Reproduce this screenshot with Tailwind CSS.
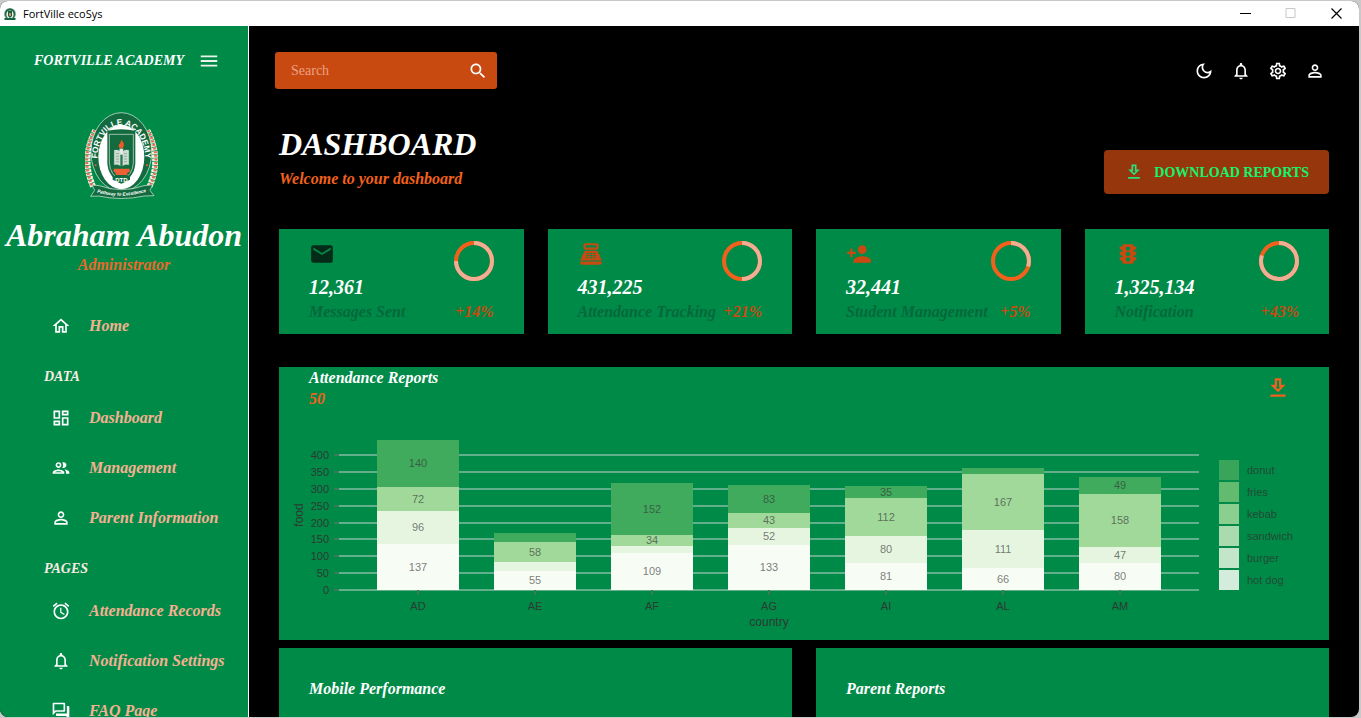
<!DOCTYPE html>
<html lang="en">
<head>
<meta charset="utf-8">
<title>FortVille ecoSys</title>
<script src="https://cdn.jsdelivr.net/npm/@tailwindcss/browser@4"></script>
</head>
<body class="bg-[#c9c9c9]">
<svg class="hidden" aria-hidden="true">
  <symbol id="i-menu" viewBox="0 0 24 24"><path d="M3 18h18v-2H3v2zm0-5h18v-2H3v2zm0-7v2h18V6H3z"/></symbol>
  <symbol id="i-home" viewBox="0 0 24 24"><path d="m12 5.69 5 4.5V18h-2v-6H9v6H7v-7.81l5-4.5M12 3 2 12h3v8h6v-6h2v6h6v-8h3L12 3z"/></symbol>
  <symbol id="i-dash" viewBox="0 0 24 24"><path d="M19 5v2h-4V5h4M9 5v6H5V5h4m10 8v6h-4v-6h4M9 17v2H5v-2h4M21 3h-8v6h8V3zM11 3H3v10h8V3zm10 8h-8v10h8V11zm-10 4H3v6h8v-6z"/></symbol>
  <symbol id="i-people" viewBox="0 0 24 24"><path d="M9 13.75c-2.34 0-7 1.17-7 3.5V19h14v-1.75c0-2.33-4.66-3.5-7-3.5zM4.34 17c.84-.58 2.87-1.25 4.66-1.25s3.82.67 4.66 1.25H4.34zM9 12c1.93 0 3.5-1.57 3.5-3.5S10.93 5 9 5 5.5 6.57 5.5 8.5 7.07 12 9 12zm0-5c.83 0 1.5.67 1.5 1.5S9.83 10 9 10s-1.5-.67-1.5-1.5S8.17 7 9 7zm7.04 6.81c1.16.84 1.96 1.96 1.96 3.44V19h4v-1.75c0-2.02-3.5-3.17-5.96-3.44zM15 12c1.93 0 3.5-1.57 3.5-3.5S16.93 5 15 5c-.54 0-1.04.13-1.5.35.63.89 1 1.98 1 3.15s-.37 2.26-1 3.15c.46.22.96.35 1.5.35z"/></symbol>
  <symbol id="i-person" viewBox="0 0 24 24"><path d="M12 5.9c1.16 0 2.1.94 2.1 2.1s-.94 2.1-2.1 2.1S9.9 9.16 9.9 8s.94-2.1 2.1-2.1m0 9c2.97 0 6.1 1.46 6.1 2.1v1.1H5.9V17c0-.64 3.13-2.1 6.1-2.1M12 4C9.79 4 8 5.79 8 8s1.79 4 4 4 4-1.79 4-4-1.79-4-4-4zm0 9c-2.67 0-8 1.34-8 4v3h16v-3c0-2.66-5.33-4-8-4z"/></symbol>
  <symbol id="i-alarm" viewBox="0 0 24 24"><path d="M12.5 8H11v6l4.75 2.85.75-1.23-4-2.37V8zm4.837-6.19 4.607 3.845-1.28 1.535-4.61-3.843 1.282-1.536zm-10.674 0 1.282 1.536L3.337 7.19l-1.28-1.536L6.663 1.81zM12 4c-4.97 0-9 4.03-9 9s4.03 9 9 9 9-4.03 9-9-4.03-9-9-9zm0 16c-3.86 0-7-3.14-7-7s3.14-7 7-7 7 3.14 7 7-3.14 7-7 7z"/></symbol>
  <symbol id="i-bell" viewBox="0 0 24 24"><path d="M12 22c1.1 0 2-.9 2-2h-4c0 1.1.89 2 2 2zm6-6v-5c0-3.07-1.64-5.64-4.5-6.32V4c0-.83-.67-1.5-1.5-1.5s-1.5.67-1.5 1.5v.68C7.63 5.36 6 7.92 6 11v5l-2 2v1h16v-1l-2-2zm-2 1H8v-6c0-2.48 1.51-4.5 4-4.5s4 2.02 4 4.5v6z"/></symbol>
  <symbol id="i-forum" viewBox="0 0 24 24"><path d="M15 4v7H5.17L4 12.17V4h11m1-2H3c-.55 0-1 .45-1 1v14l4-4h10c.55 0 1-.45 1-1V3c0-.55-.45-1-1-1zm5 4h-2v9H6v2c0 .55.45 1 1 1h11l4 4V7c0-.55-.45-1-1-1z"/></symbol>
  <symbol id="i-search" viewBox="0 0 24 24"><path d="M15.5 14h-.79l-.28-.27C15.41 12.59 16 11.11 16 9.5 16 5.91 13.09 3 9.5 3S3 5.91 3 9.5 5.91 16 9.5 16c1.61 0 3.09-.59 4.23-1.57l.27.28v.79l5 4.99L20.49 19l-4.99-5zm-6 0C7.01 14 5 11.99 5 9.5S7.01 5 9.5 5 14 7.01 14 9.5 11.99 14 9.5 14z"/></symbol>
  <symbol id="i-moon" viewBox="0 0 24 24"><path d="M9.37 5.51c-.18.64-.27 1.31-.27 1.99 0 4.08 3.32 7.4 7.4 7.4.68 0 1.35-.09 1.99-.27C17.45 17.19 14.93 19 12 19c-3.86 0-7-3.14-7-7 0-2.93 1.81-5.45 4.37-6.49zM12 3c-4.97 0-9 4.03-9 9s4.03 9 9 9 9-4.03 9-9c0-.46-.04-.92-.1-1.36-.98 1.37-2.58 2.26-4.4 2.26-2.98 0-5.4-2.42-5.4-5.4 0-1.81.89-3.42 2.26-4.4-.44-.06-.9-.1-1.36-.1z"/></symbol>
  <symbol id="i-gear" viewBox="0 0 24 24"><path d="M19.43 12.98c.04-.32.07-.64.07-.98 0-.34-.03-.66-.07-.98l2.11-1.65c.19-.15.24-.42.12-.64l-2-3.46c-.09-.16-.26-.25-.44-.25-.06 0-.12.01-.17.03l-2.49 1c-.52-.4-1.08-.73-1.69-.98l-.38-2.65C14.46 2.18 14.25 2 14 2h-4c-.25 0-.46.18-.49.42l-.38 2.65c-.61.25-1.17.59-1.69.98l-2.49-1c-.06-.02-.12-.03-.18-.03-.17 0-.34.09-.43.25l-2 3.46c-.13.22-.07.49.12.64l2.11 1.65c-.04.32-.07.65-.07.98 0 .33.03.66.07.98l-2.11 1.65c-.19.15-.24.42-.12.64l2 3.46c.09.16.26.25.44.25.06 0 .12-.01.17-.03l2.49-1c.52.4 1.08.73 1.69.98l.38 2.65c.03.24.24.42.49.42h4c.25 0 .46-.18.49-.42l.38-2.65c.61-.25 1.17-.59 1.69-.98l2.49 1c.06.02.12.03.18.03.17 0 .34-.09.43-.25l2-3.46c.12-.22.07-.49-.12-.64l-2.11-1.65zm-1.98-1.71c.04.31.05.52.05.73 0 .21-.02.43-.05.73l-.14 1.13.89.7 1.08.84-.7 1.21-1.27-.51-1.04-.42-.9.68c-.43.32-.84.56-1.25.73l-1.06.43-.16 1.13-.2 1.35h-1.4l-.19-1.35-.16-1.13-1.06-.43c-.43-.18-.83-.41-1.23-.71l-.91-.7-1.06.43-1.27.51-.7-1.21 1.08-.84.89-.7-.14-1.13c-.03-.31-.05-.54-.05-.74s.02-.43.05-.73l.14-1.13-.89-.7-1.08-.84.7-1.21 1.27.51 1.04.42.9-.68c.43-.32.84-.56 1.25-.73l1.06-.43.16-1.13.2-1.35h1.39l.19 1.35.16 1.13 1.06.43c.43.18.83.41 1.23.71l.91.7 1.06-.43 1.27-.51.7 1.21-1.07.85-.89.7.14 1.13zM12 8c-2.21 0-4 1.79-4 4s1.79 4 4 4 4-1.79 4-4-1.79-4-4-4zm0 6c-1.1 0-2-.9-2-2s.9-2 2-2 2 .9 2 2-.9 2-2 2z"/></symbol>
  <symbol id="i-download" viewBox="0 0 24 24"><path d="M19 9h-4V3H9v6H5l7 7 7-7zm-8 2V5h2v6h1.17L12 13.17 9.83 11H11zm-6 7h14v2H5z"/></symbol>
  <symbol id="i-mail" viewBox="0 0 24 24"><path d="M20 4H4c-1.1 0-1.99.9-1.99 2L2 18c0 1.1.9 2 2 2h16c1.1 0 2-.9 2-2V6c0-1.1-.9-2-2-2zm0 4l-8 5-8-5V6l8 5 8-5v2z"/></symbol>
  <symbol id="i-pos" viewBox="0 0 24 24"><path fill-rule="evenodd" d="M17 2H7c-1.1 0-2 .9-2 2v2c0 1.1.9 2 2 2h10c1.1 0 2-.9 2-2V4c0-1.1-.9-2-2-2zm0 4H7V4h10v2zm3 16H4c-1.100 0-2-.9-2-2v-1h20v1c0 1.100-.9 2-2 2zm-1.470-11.810C18.210 9.470 17.490 9 16.700 9H7.300c-.79 0-1.510.47-1.830 1.190L2 18h20l-3.470-7.810zM8 11h2v1H8zm3 0h2v1h-2zm3 0h2v1h-2zM8 13h2v1H8zm3 0h2v1h-2zm3 0h2v1h-2zM8 15h2v1H8zm3 0h2v1h-2zm3 0h2v1h-2z"/></symbol>
  <symbol id="i-add" viewBox="0 0 24 24"><path d="M15 12c2.21 0 4-1.79 4-4s-1.79-4-4-4-4 1.79-4 4 1.79 4 4 4zm-9-2V7H4v3H1v2h3v3h2v-3h3v-2H6zm9 4c-2.67 0-8 1.34-8 4v2h16v-2c0-2.66-5.33-4-8-4z"/></symbol>
  <symbol id="i-traffic" viewBox="0 0 24 24"><path d="M20 10h-3V8.86c1.72-.45 3-2 3-3.86h-3V4c0-.55-.45-1-1-1H8c-.55 0-1 .45-1 1v1H4c0 1.86 1.28 3.41 3 3.86V10H4c0 1.86 1.28 3.41 3 3.86V15H4c0 1.86 1.28 3.41 3 3.86V20c0 .55.45 1 1 1h8c.55 0 1-.45 1-1v-1.14c1.72-.45 3-2 3-3.86h-3v-1.14c1.72-.45 3-2 3-3.86zm-8 9c-1.11 0-2-.9-2-2s.89-2 2-2c1.1 0 2 .9 2 2s-.89 2-2 2zm0-5c-1.11 0-2-.9-2-2s.89-2 2-2c1.1 0 2 .9 2 2s-.89 2-2 2zm0-5c-1.11 0-2-.9-2-2 0-1.11.89-2 2-2 1.1 0 2 .89 2 2 0 1.1-.89 2-2 2z"/></symbol>
</svg>

<div class="h-screen overflow-hidden pt-px pr-0.5 pb-px">
<div class="flex h-full flex-col overflow-hidden rounded-lg bg-black font-['Liberation_Serif',serif] text-white">

  <!-- Window title bar -->
  <div class="flex h-[25px] shrink-0 items-center bg-white pl-[3px] text-black">
    <svg class="size-[14px]" viewBox="0 0 14 14"><ellipse cx="7" cy="7" rx="6" ry="6" fill="#7fa894"/><ellipse cx="7" cy="7" rx="5" ry="5.500" fill="#17633f"/><ellipse cx="7" cy="7.500" rx="3.600" ry="4" fill="#e6efe9"/><path d="M5 4h4v5l-2 2-2-2z" fill="#17633f"/><path d="M6 6h2v3H6z" fill="#d98a6a"/><path d="M1.500 11h11v2h-11z" fill="#17633f"/></svg>
    <span class="ml-1.5 font-['Open_Sans',sans-serif] text-[11px] leading-4">FortVille ecoSys</span>
    <div class="ml-auto flex">
      <button class="flex h-6 w-[46px] items-center justify-center" aria-label="Minimize"><svg class="size-[11px]" viewBox="0 0 11 11"><path d="M0 5.500h11" stroke="#000"/></svg></button>
      <button class="flex h-6 w-[45px] items-center justify-center" aria-label="Maximize"><svg class="size-[11px]" viewBox="0 0 11 11"><path d="M1 .5h9v9H1z" fill="none" stroke="#c8c8c8"/></svg></button>
      <button class="flex h-6 w-[46px] items-center justify-center" aria-label="Close"><svg class="size-[11px]" viewBox="0 0 11 11"><path d="M.5.5l10 10m0-10l-10 10" stroke="#000" stroke-width="1.200"/></svg></button>
    </div>
  </div>

  <div class="flex min-h-0 flex-1">
    <!-- Sidebar -->
    <aside class="w-[249px] shrink-0 overflow-hidden border-r border-white bg-[#008a48] pt-5 font-bold italic">
      <div class="flex h-[30px] items-center gap-[14px] pl-[34px]">
        <span class="text-[14px] leading-5 whitespace-nowrap">FORTVILLE ACADEMY</span>
        <button aria-label="Toggle menu"><svg class="size-[22px] fill-[#e9f3ec]"><use href="#i-menu"/></svg></button>
      </div>

      <svg class="mt-[36px] ml-[85px] h-[88px] w-[73px]" viewBox="45 37 219 264" role="img" aria-label="Fortville Academy crest">
        <g fill="none">
          <path d="M76 92Q32 176 70 262M232 92Q276 176 238 262" stroke="#f6efe9" stroke-width="18" stroke-dasharray="9 2"/>
          <path d="M74 92Q30 176 67 258M234 92Q278 176 241 258" stroke="#e0704a" stroke-width="9" stroke-dasharray="6 5"/>
        </g>
        <ellipse cx="154" cy="157" rx="91" ry="118" fill="#136a3f" stroke="#e6f1ea" stroke-width="2"/>
        <ellipse cx="154" cy="172" rx="69" ry="97" fill="#fff"/>
        <path id="crest-arc" d="M82 180A72 104 0 0 1 226 180" fill="none"/>
        <text class="font-['Liberation_Sans',sans-serif] text-[25px] font-bold not-italic" fill="#fff" text-anchor="middle"><textPath href="#crest-arc" startOffset="50%">FORTVILLE ACADEMY</textPath></text>
        <circle cx="77" cy="197" r="3" fill="#e8622c"/><circle cx="231" cy="197" r="3" fill="#e8622c"/>
        <path d="M112 93Q154 84 196 93V190Q194 232 154 251Q114 232 112 190Z" fill="#136a3f"/>
        <path d="M118 104H190V190Q188 226 154 243Q120 226 118 190Z" fill="none" stroke="#dfeae3" stroke-width="2"/>
        <path d="M154 120q11 12 6 22q-2 5-6 5q-6 0-8-7q-1-6 5-10q1-4 3-10z" fill="#f15a24"/>
        <path d="M148 147h12l-3 18h-6z" fill="#e6e9e7"/>
        <path d="M133 152q12-3 20 5v42q-9-7-20-4zM176 152q-12-3-20 5v42q9-7 20-4z" fill="#cfdcd4" stroke="#fff" stroke-width="1"/>
        <path d="M138 162h9m-9 8h9m-9 8h9m-9 8h9m15-24h9m-9 8h9m-9 8h9m-9 8h9" stroke="#6f9a83" stroke-width="2"/>
        <path d="M151 165h7v34h-7z" fill="#2a7a51"/>
        <path d="M131 207h48v9l-7 3v7h-35v-7l-6-3z" fill="#ee5f35"/>
        <path d="M128 228h52v12l-26 12l-26-12z" fill="#136a3f"/>
        <text x="154" y="247" class="font-['Liberation_Sans',sans-serif] text-[18px] font-bold not-italic" fill="#fff" text-anchor="middle">DTD</text>
        <path d="M66 256L88 258Q154 282 222 258L248 255L240 272L252 288L222 289Q154 304 86 289L62 290L74 272Z" fill="#136a3f" stroke="#e6f1ea" stroke-width="2"/>
        <path id="crest-ribbon" d="M82 279Q154 298 228 277" fill="none"/>
        <text class="font-['Liberation_Sans',sans-serif] text-[14px] font-bold italic" fill="#fff" text-anchor="middle"><textPath href="#crest-ribbon" startOffset="50%">Pathway to Excellence</textPath></text>
      </svg>

      <div class="mt-[16px] text-center">
        <h2 class="text-[32px] leading-[38px] whitespace-nowrap">Abraham Abudon</h2>
        <p class="text-[16px] leading-[22px] text-[#e8692b]">Administrator</p>
      </div>

      <nav class="mt-[25px] text-[16px] text-[#f5b191]">
        <a href="#" class="flex h-[50px] items-center gap-[18px] pl-[51px]"><svg class="size-5 fill-white"><use href="#i-home"/></svg>Home</a>
        <h6 class="mt-4 mb-[6px] pl-[44px] text-[14px] leading-5 text-[#f8ece2]">DATA</h6>
        <a href="#" class="flex h-[50px] items-center gap-[18px] pl-[51px]"><svg class="size-5 fill-white"><use href="#i-dash"/></svg>Dashboard</a>
        <a href="#" class="flex h-[50px] items-center gap-[18px] pl-[51px]"><svg class="size-5 fill-white"><use href="#i-people"/></svg>Management</a>
        <a href="#" class="flex h-[50px] items-center gap-[18px] pl-[51px]"><svg class="size-5 fill-white"><use href="#i-person"/></svg>Parent Information</a>
        <h6 class="mt-4 mb-[7px] pl-[44px] text-[14px] leading-5 text-[#f8ece2]">PAGES</h6>
        <a href="#" class="flex h-[50px] items-center gap-[18px] pl-[51px]"><svg class="size-5 fill-white"><use href="#i-alarm"/></svg>Attendance Records</a>
        <a href="#" class="flex h-[50px] items-center gap-[18px] pl-[51px]"><svg class="size-5 fill-white"><use href="#i-bell"/></svg>Notification Settings</a>
        <a href="#" class="flex h-[50px] items-center gap-[18px] pl-[51px]"><svg class="size-5 fill-white"><use href="#i-forum"/></svg>FAQ Page</a>
      </nav>
    </aside>

    <!-- Content -->
    <main class="min-w-0 flex-1 overflow-hidden pt-[26px]">
      <header class="flex items-center justify-between px-[26px]">
        <form class="flex h-[37px] w-[222px] items-center rounded-[3px] bg-[#c94a10] pr-[9px] pl-4">
          <input type="text" aria-label="Search" placeholder="Search" class="min-w-0 flex-1 bg-transparent text-[14px] text-white outline-none placeholder:text-[#e9a084]">
          <button type="button" aria-label="Search"><svg class="size-5 fill-white"><use href="#i-search"/></svg></button>
        </form>
        <div class="flex">
          <button class="flex h-9 w-[37px] items-center justify-center" aria-label="Dark mode"><svg class="size-5 fill-white"><use href="#i-moon"/></svg></button>
          <button class="flex h-9 w-[37px] items-center justify-center" aria-label="Notifications"><svg class="size-5 fill-white"><use href="#i-bell"/></svg></button>
          <button class="flex h-9 w-[37px] items-center justify-center" aria-label="Settings"><svg class="size-5 fill-white"><use href="#i-gear"/></svg></button>
          <button class="flex h-9 w-[37px] items-center justify-center" aria-label="Profile"><svg class="size-5 fill-white"><use href="#i-person"/></svg></button>
        </div>
      </header>

      <div class="px-[30px]">
        <div class="mt-[35px] flex items-end justify-between">
          <div class="font-bold italic">
            <h1 class="text-[32px] leading-10">DASHBOARD</h1>
            <p class="pb-px text-[16px] leading-[29px] text-[#f2611c]">Welcome to your dashboard</p>
          </div>
          <button class="flex h-11 items-center gap-[10px] rounded-[4px] bg-[#96360c] px-5 text-[14px] font-bold whitespace-nowrap text-[#12f56e]"><svg class="size-5 fill-[#2adf7c]"><use href="#i-download"/></svg>DOWNLOAD REPORTS</button>
        </div>

        <div class="mt-[35px] grid grid-cols-4 gap-6 font-bold italic">
          <section class="bg-[#008a48] px-[30px] pt-3 pb-[10px]">
            <div class="flex items-start justify-between">
              <div><svg class="size-[26px] fill-[#042a18]"><use href="#i-mail"/></svg><p class="mt-[7px] text-[20px] leading-[26px]">12,361</p></div>
              <svg class="size-10 -rotate-90" viewBox="0 0 40 40" fill="none" stroke-width="4"><circle cx="20" cy="20" r="18" stroke="#f2611c"/><circle cx="20" cy="20" r="18" stroke="#f2ae94" pathLength="100" stroke-dasharray="75 25"/></svg>
            </div>
            <div class="flex justify-between text-[16px] leading-6 whitespace-nowrap"><span class="text-[#04683a]">Messages Sent</span><span class="text-[#c94a10]">+14%</span></div>
          </section>
          <section class="bg-[#008a48] px-[30px] pt-3 pb-[10px]">
            <div class="flex items-start justify-between">
              <div><svg class="size-[26px] fill-[#c94a10]"><use href="#i-pos"/></svg><p class="mt-[7px] text-[20px] leading-[26px]">431,225</p></div>
              <svg class="size-10 -rotate-90" viewBox="0 0 40 40" fill="none" stroke-width="4"><circle cx="20" cy="20" r="18" stroke="#f2611c"/><circle cx="20" cy="20" r="18" stroke="#f2ae94" pathLength="100" stroke-dasharray="50 50"/></svg>
            </div>
            <div class="flex justify-between text-[16px] leading-6 whitespace-nowrap"><span class="text-[#04683a]">Attendance Tracking</span><span class="text-[#c94a10]">+21%</span></div>
          </section>
          <section class="bg-[#008a48] px-[30px] pt-3 pb-[10px]">
            <div class="flex items-start justify-between">
              <div><svg class="size-[26px] fill-[#c94a10]"><use href="#i-add"/></svg><p class="mt-[7px] text-[20px] leading-[26px]">32,441</p></div>
              <svg class="size-10 -rotate-90" viewBox="0 0 40 40" fill="none" stroke-width="4"><circle cx="20" cy="20" r="18" stroke="#f2611c"/><circle cx="20" cy="20" r="18" stroke="#f2ae94" pathLength="100" stroke-dasharray="30 70"/></svg>
            </div>
            <div class="flex justify-between text-[16px] leading-6 whitespace-nowrap"><span class="text-[#04683a]">Student Management</span><span class="text-[#c94a10]">+5%</span></div>
          </section>
          <section class="bg-[#008a48] px-[30px] pt-3 pb-[10px]">
            <div class="flex items-start justify-between">
              <div><svg class="size-[26px] fill-[#c94a10]"><use href="#i-traffic"/></svg><p class="mt-[7px] text-[20px] leading-[26px]">1,325,134</p></div>
              <svg class="size-10 -rotate-90" viewBox="0 0 40 40" fill="none" stroke-width="4"><circle cx="20" cy="20" r="18" stroke="#f2611c"/><circle cx="20" cy="20" r="18" stroke="#f2ae94" pathLength="100" stroke-dasharray="80 20"/></svg>
            </div>
            <div class="flex justify-between text-[16px] leading-6 whitespace-nowrap"><span class="text-[#04683a]">Notification</span><span class="text-[#c94a10]">+43%</span></div>
          </section>
        </div>

        <section class="mt-[33px] bg-[#008a48]">
          <div class="flex items-start justify-between px-[30px] text-[16px] leading-[21px] font-bold italic">
            <div><h3>Attendance Reports</h3><p class="text-[#f2611c]">50</p></div>
            <button class="flex h-[42px] w-[42px] items-center justify-center" aria-label="Download attendance report"><svg class="size-[26px] fill-[#f2611c]"><use href="#i-download"/></svg></button>
          </div>
          <svg id="chart" class="block w-full font-['Liberation_Sans',sans-serif] text-[11px]" viewBox="0 0 1050 231" role="img" aria-label="Food by country"></svg>
        </section>

        <div class="mt-2 grid grid-cols-2 gap-6 text-[16px] leading-[22px] font-bold italic">
          <section class="h-64 bg-[#008a48] p-[30px]"><h3>Mobile Performance</h3></section>
          <section class="h-64 bg-[#008a48] p-[30px]"><h3>Parent Reports</h3></section>
        </div>
      </div>
    </main>
  </div>
</div>
</div>

<script>
const data = [
  ['AD', [137, 96, 72, 140]], ['AE', [55, 28, 58, 28]], ['AF', [109, 21, 34, 152]],
  ['AG', [133, 52, 43, 83]], ['AI', [81, 80, 112, 35]], ['AL', [66, 111, 167, 19]], ['AM', [80, 47, 158, 49]]
];
const colors = ['#f7fcf5', '#e5f5e0', '#a1d99b', '#41ab5d'];
const legend = [['donut', '#38a55a'], ['fries', '#63bb70'], ['kebab', '#8acf8f'], ['sandwich', '#a9dbae'], ['burger', '#c3e6ca'], ['hot dog', '#d3ecdb']];
const base = 181, left = 60, right = 920;
const y = v => Math.round(base - v * 150 / 445);
let out = '';
for (let v = 0; v <= 400; v += 50) {
  out += `<path d="M${left} ${y(v)}H${right}" stroke="#62b08b" stroke-width="2"/>`;
  out += `<path d="M${left - 5} ${y(v)}h5" stroke="#3c7a59" stroke-width="2"/>`;
  out += `<text x="${left - 10}" y="${y(v) + 4}" text-anchor="end" fill="#2c3a31">${v}</text>`;
}
data.forEach(([name, values], i) => {
  const x = 98 + i * 117;
  let sum = 0;
  values.forEach((v, k) => {
    const bottom = y(sum), top = y(sum + v);
    out += `<rect x="${x}" y="${top}" width="82" height="${bottom - top}" fill="${colors[k]}"/>`;
    if (v > 30) out += `<text x="${x + 41}" y="${Math.floor((top + bottom) / 2) + 4}" text-anchor="middle" fill="#333" fill-opacity=".65">${v}</text>`;
    sum += v;
  });
  out += `<path d="M${x + 41} ${base}v5" stroke="#3c7a59" stroke-width="2"/>`;
  out += `<text x="${x + 41}" y="201" text-anchor="middle" fill="#2c3a31">${name}</text>`;
});
out += `<text class="text-[12px]" x="490" y="217" text-anchor="middle" fill="#2c3a31">country</text>`;
out += `<text class="text-[12px]" transform="translate(24 106) rotate(-90)" text-anchor="middle" fill="#2c3a31">food</text>`;
legend.forEach(([name, fill], i) => {
  out += `<rect x="940" y="${51 + i * 22}" width="20" height="20" fill="${fill}"/>`;
  out += `<text x="968" y="${65 + i * 22}" fill="#214a34">${name}</text>`;
});
document.getElementById('chart').innerHTML = out;
</script>
</body>
</html>
